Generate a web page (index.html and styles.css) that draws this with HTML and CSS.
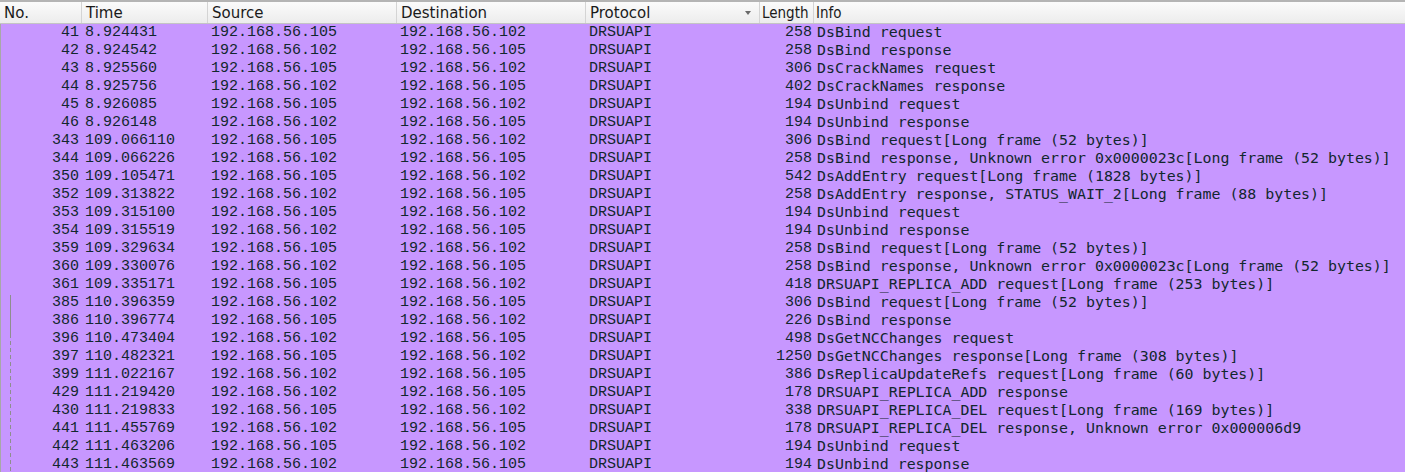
FILE: index.html
```html
<!DOCTYPE html>
<html>
<head>
<meta charset="utf-8">
<link rel="stylesheet" href="styles.css">
</head>
<body>
<div class="list">
  <div class="header">
    <div class="hc c-no">No.</div>
    <div class="hc c-time">Time</div>
    <div class="hc c-src">Source</div>
    <div class="hc c-dst">Destination</div>
    <div class="hc c-proto">Protocol<span class="sort"></span></div>
    <div class="hc c-len cond">Length</div>
    <div class="hc c-info cond">Info</div>
  </div>
  <div class="body">
    <div class="related"><div class="solid"></div><div class="dashed"></div></div>
    <div class="row"><div class="c c-no">41</div><div class="c c-time">8.924431</div><div class="c c-src">192.168.56.105</div><div class="c c-dst">192.168.56.102</div><div class="c c-proto">DRSUAPI</div><div class="c c-len">258</div><div class="c c-info">DsBind request</div></div>
    <div class="row"><div class="c c-no">42</div><div class="c c-time">8.924542</div><div class="c c-src">192.168.56.102</div><div class="c c-dst">192.168.56.105</div><div class="c c-proto">DRSUAPI</div><div class="c c-len">258</div><div class="c c-info">DsBind response</div></div>
    <div class="row"><div class="c c-no">43</div><div class="c c-time">8.925560</div><div class="c c-src">192.168.56.105</div><div class="c c-dst">192.168.56.102</div><div class="c c-proto">DRSUAPI</div><div class="c c-len">306</div><div class="c c-info">DsCrackNames request</div></div>
    <div class="row"><div class="c c-no">44</div><div class="c c-time">8.925756</div><div class="c c-src">192.168.56.102</div><div class="c c-dst">192.168.56.105</div><div class="c c-proto">DRSUAPI</div><div class="c c-len">402</div><div class="c c-info">DsCrackNames response</div></div>
    <div class="row"><div class="c c-no">45</div><div class="c c-time">8.926085</div><div class="c c-src">192.168.56.105</div><div class="c c-dst">192.168.56.102</div><div class="c c-proto">DRSUAPI</div><div class="c c-len">194</div><div class="c c-info">DsUnbind request</div></div>
    <div class="row"><div class="c c-no">46</div><div class="c c-time">8.926148</div><div class="c c-src">192.168.56.102</div><div class="c c-dst">192.168.56.105</div><div class="c c-proto">DRSUAPI</div><div class="c c-len">194</div><div class="c c-info">DsUnbind response</div></div>
    <div class="row"><div class="c c-no">343</div><div class="c c-time">109.066110</div><div class="c c-src">192.168.56.105</div><div class="c c-dst">192.168.56.102</div><div class="c c-proto">DRSUAPI</div><div class="c c-len">306</div><div class="c c-info">DsBind request[Long frame (52 bytes)]</div></div>
    <div class="row"><div class="c c-no">344</div><div class="c c-time">109.066226</div><div class="c c-src">192.168.56.102</div><div class="c c-dst">192.168.56.105</div><div class="c c-proto">DRSUAPI</div><div class="c c-len">258</div><div class="c c-info">DsBind response, Unknown error 0x0000023c[Long frame (52 bytes)]</div></div>
    <div class="row"><div class="c c-no">350</div><div class="c c-time">109.105471</div><div class="c c-src">192.168.56.105</div><div class="c c-dst">192.168.56.102</div><div class="c c-proto">DRSUAPI</div><div class="c c-len">542</div><div class="c c-info">DsAddEntry request[Long frame (1828 bytes)]</div></div>
    <div class="row"><div class="c c-no">352</div><div class="c c-time">109.313822</div><div class="c c-src">192.168.56.102</div><div class="c c-dst">192.168.56.105</div><div class="c c-proto">DRSUAPI</div><div class="c c-len">258</div><div class="c c-info">DsAddEntry response, STATUS_WAIT_2[Long frame (88 bytes)]</div></div>
    <div class="row"><div class="c c-no">353</div><div class="c c-time">109.315100</div><div class="c c-src">192.168.56.105</div><div class="c c-dst">192.168.56.102</div><div class="c c-proto">DRSUAPI</div><div class="c c-len">194</div><div class="c c-info">DsUnbind request</div></div>
    <div class="row"><div class="c c-no">354</div><div class="c c-time">109.315519</div><div class="c c-src">192.168.56.102</div><div class="c c-dst">192.168.56.105</div><div class="c c-proto">DRSUAPI</div><div class="c c-len">194</div><div class="c c-info">DsUnbind response</div></div>
    <div class="row"><div class="c c-no">359</div><div class="c c-time">109.329634</div><div class="c c-src">192.168.56.105</div><div class="c c-dst">192.168.56.102</div><div class="c c-proto">DRSUAPI</div><div class="c c-len">258</div><div class="c c-info">DsBind request[Long frame (52 bytes)]</div></div>
    <div class="row"><div class="c c-no">360</div><div class="c c-time">109.330076</div><div class="c c-src">192.168.56.102</div><div class="c c-dst">192.168.56.105</div><div class="c c-proto">DRSUAPI</div><div class="c c-len">258</div><div class="c c-info">DsBind response, Unknown error 0x0000023c[Long frame (52 bytes)]</div></div>
    <div class="row"><div class="c c-no">361</div><div class="c c-time">109.335171</div><div class="c c-src">192.168.56.105</div><div class="c c-dst">192.168.56.102</div><div class="c c-proto">DRSUAPI</div><div class="c c-len">418</div><div class="c c-info">DRSUAPI_REPLICA_ADD request[Long frame (253 bytes)]</div></div>
    <div class="row"><div class="c c-no">385</div><div class="c c-time">110.396359</div><div class="c c-src">192.168.56.102</div><div class="c c-dst">192.168.56.105</div><div class="c c-proto">DRSUAPI</div><div class="c c-len">306</div><div class="c c-info">DsBind request[Long frame (52 bytes)]</div></div>
    <div class="row"><div class="c c-no">386</div><div class="c c-time">110.396774</div><div class="c c-src">192.168.56.105</div><div class="c c-dst">192.168.56.102</div><div class="c c-proto">DRSUAPI</div><div class="c c-len">226</div><div class="c c-info">DsBind response</div></div>
    <div class="row"><div class="c c-no">396</div><div class="c c-time">110.473404</div><div class="c c-src">192.168.56.102</div><div class="c c-dst">192.168.56.105</div><div class="c c-proto">DRSUAPI</div><div class="c c-len">498</div><div class="c c-info">DsGetNCChanges request</div></div>
    <div class="row"><div class="c c-no">397</div><div class="c c-time">110.482321</div><div class="c c-src">192.168.56.105</div><div class="c c-dst">192.168.56.102</div><div class="c c-proto">DRSUAPI</div><div class="c c-len">1250</div><div class="c c-info">DsGetNCChanges response[Long frame (308 bytes)]</div></div>
    <div class="row"><div class="c c-no">399</div><div class="c c-time">111.022167</div><div class="c c-src">192.168.56.102</div><div class="c c-dst">192.168.56.105</div><div class="c c-proto">DRSUAPI</div><div class="c c-len">386</div><div class="c c-info">DsReplicaUpdateRefs request[Long frame (60 bytes)]</div></div>
    <div class="row"><div class="c c-no">429</div><div class="c c-time">111.219420</div><div class="c c-src">192.168.56.102</div><div class="c c-dst">192.168.56.105</div><div class="c c-proto">DRSUAPI</div><div class="c c-len">178</div><div class="c c-info">DRSUAPI_REPLICA_ADD response</div></div>
    <div class="row"><div class="c c-no">430</div><div class="c c-time">111.219833</div><div class="c c-src">192.168.56.105</div><div class="c c-dst">192.168.56.102</div><div class="c c-proto">DRSUAPI</div><div class="c c-len">338</div><div class="c c-info">DRSUAPI_REPLICA_DEL request[Long frame (169 bytes)]</div></div>
    <div class="row"><div class="c c-no">441</div><div class="c c-time">111.455769</div><div class="c c-src">192.168.56.102</div><div class="c c-dst">192.168.56.105</div><div class="c c-proto">DRSUAPI</div><div class="c c-len">178</div><div class="c c-info">DRSUAPI_REPLICA_DEL response, Unknown error 0x000006d9</div></div>
    <div class="row"><div class="c c-no">442</div><div class="c c-time">111.463206</div><div class="c c-src">192.168.56.105</div><div class="c c-dst">192.168.56.102</div><div class="c c-proto">DRSUAPI</div><div class="c c-len">194</div><div class="c c-info">DsUnbind request</div></div>
    <div class="row"><div class="c c-no">443</div><div class="c c-time">111.463569</div><div class="c c-src">192.168.56.102</div><div class="c c-dst">192.168.56.105</div><div class="c c-proto">DRSUAPI</div><div class="c c-len">194</div><div class="c c-info">DsUnbind response</div></div>
  </div>
</div>
</body>
</html>
```

FILE: styles.css
```css
html, body {
  margin: 0;
  padding: 0;
  background: #c797ff;
  overflow: hidden;
}
.list {
  width: 1405px;
  height: 472px;
  overflow: hidden;
  display: flex;
  flex-direction: column;
  border-top: 2px solid #b4b4b4;
  box-sizing: border-box;
}
.header {
  display: flex;
  height: 21px;
  flex: none;
  background: linear-gradient(#fbfbfb, #ececec);
  border-bottom: 1px solid #c4c4c4;
  font-family: "DejaVu Sans", sans-serif;
  font-size: 15px;
  color: #1a1a1a;
}
.hc {
  box-sizing: border-box;
  padding-left: 4px;
  line-height: 22px;
  border-right: 1px solid #d4d4d4;
  white-space: nowrap;
  overflow: hidden;
  position: relative;
}
.hc.cond {
  font-stretch: condensed;
  padding-left: 2px;
}
.hc.c-info { border-right: none; }
.sort {
  position: absolute;
  right: 8px;
  top: 9px;
  width: 0;
  height: 0;
  border-left: 3.5px solid transparent;
  border-right: 3.5px solid transparent;
  border-top: 4px solid #6a6a6a;
}
.c-no { width: 82px; }
.c-time { width: 126px; }
.c-src { width: 189px; }
.c-dst { width: 189px; }
.c-proto { width: 174px; }
.c-len { width: 54px; }
.c-info { flex: 1; }
.body {
  position: relative;
  flex: 1;
  border-left: 1px solid #a8a8a8;
}
.row {
  display: flex;
  height: 18px;
  line-height: 18px;
  font-family: "Liberation Mono", monospace;
  font-size: 15px;
  color: #12272e;
  white-space: nowrap;
  margin-left: -1px;
}
.c {
  box-sizing: border-box;
  padding-left: 3px;
  overflow: hidden;
}
.c.c-no, .c.c-len {
  text-align: right;
  padding-left: 0;
  padding-right: 3px;
}
.c.c-len { padding-right: 2px; }
.c.c-info {
  font-family: "DejaVu Sans Mono", monospace;
  font-size: 14.9px;
  line-height: 16px;
  overflow: visible;
}
.related {
  position: absolute;
  left: 9px;
  top: 271px;
  width: 1px;
  height: 200px;
}
.solid {
  height: 39px;
  background: #8e8e8e;
}
.dashed {
  height: 161px;
  background: repeating-linear-gradient(#8e8e8e 0 4px, transparent 4px 7px);
}
```
